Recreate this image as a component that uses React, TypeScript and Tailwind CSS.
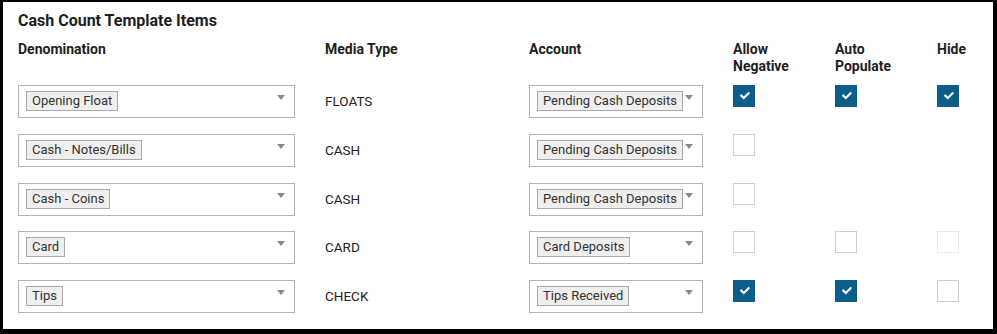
const rows = [
    { denom: 'Opening Float', media: 'FLOATS', account: 'Pending Cash Deposits', neg: true, auto: true, hide: true },
    { denom: 'Cash - Notes/Bills', media: 'CASH', account: 'Pending Cash Deposits', neg: false },
    { denom: 'Cash - Coins', media: 'CASH', account: 'Pending Cash Deposits', neg: false },
    { denom: 'Card', media: 'CARD', account: 'Card Deposits', neg: false, auto: false, hide: false, hideDisabled: true },
    { denom: 'Tips', media: 'CHECK', account: 'Tips Received', neg: true, auto: true, hide: false },
];

function Check({ checked, disabled }: { checked?: boolean, disabled?: boolean }) {
    if (checked === undefined) return <div />;
    if (checked) {
        return (
            <div className="w-[22px] h-[22px] bg-[#0b5e8a]">
                <svg width="22" height="22" viewBox="0 0 22 22">
                    <path d="M8.3 10.6 L10.8 13 L15.6 8.2" fill="none" stroke="#fff" strokeWidth="2.1" strokeLinecap="square" />
                </svg>
            </div>
        );
    }
    return <div className={`w-[22px] h-[22px] bg-white border ${disabled ? 'border-[#e8e8e8]' : 'border-[#d2cfca]'}`} />;
}

function Select({ value, width }: { value: string, width: string }) {
    return (
        <div className={`relative flex items-start h-[33px] border border-[#b4b4b4] bg-white pl-[7px] pt-[5px] ${width}`}>
            <span className="block h-[20px] leading-[18px] px-[5px] border border-[#a9a9a9] bg-[#efefef] text-[13px] text-[#333]">{value}</span>
            <div className="absolute right-[9px] top-[9px] w-0 h-0 border-l-[4px] border-r-[4px] border-t-[5px] border-l-transparent border-r-transparent border-t-[#8a8a8a]" />
        </div>
    );
}

export default function App() {
    return (
        <div className="w-[997px] h-[334px] bg-white border-black border-t-2 border-l-[3px] border-r-4 border-b-[5px] font-['Roboto',sans-serif] text-[#222]">
            <div className="pl-[15px]">
                <p className="mt-[9px] text-[16px] leading-[20px] font-bold text-[#1e1e1e]">Cash Count Template Items</p>
                <div className="grid grid-cols-[307px_204px_204px_102px_102px_1fr] mt-[10px] text-[14px] leading-[17px] font-bold text-[#1e1e1e]">
                    <p>Denomination</p>
                    <p>Media Type</p>
                    <p>Account</p>
                    <p>Allow<br />Negative</p>
                    <p>Auto<br />Populate</p>
                    <p>Hide</p>
                </div>
                <div className="flex flex-col gap-[15.75px] mt-[10px]">
                    {rows.map((r, i) => (
                        <div key={i} className="grid grid-cols-[307px_204px_204px_102px_102px_1fr] items-start">
                            <Select value={r.denom} width="w-[277px]" />
                            <p className="text-[13.5px] leading-[33px] text-[#222]">{r.media}</p>
                            <Select value={r.account} width="w-[174px]" />
                            <Check checked={r.neg} />
                            <Check checked={r.auto} />
                            <Check checked={r.hide} disabled={r.hideDisabled} />
                        </div>
                    ))}
                </div>
            </div>
        </div>
    );
}
